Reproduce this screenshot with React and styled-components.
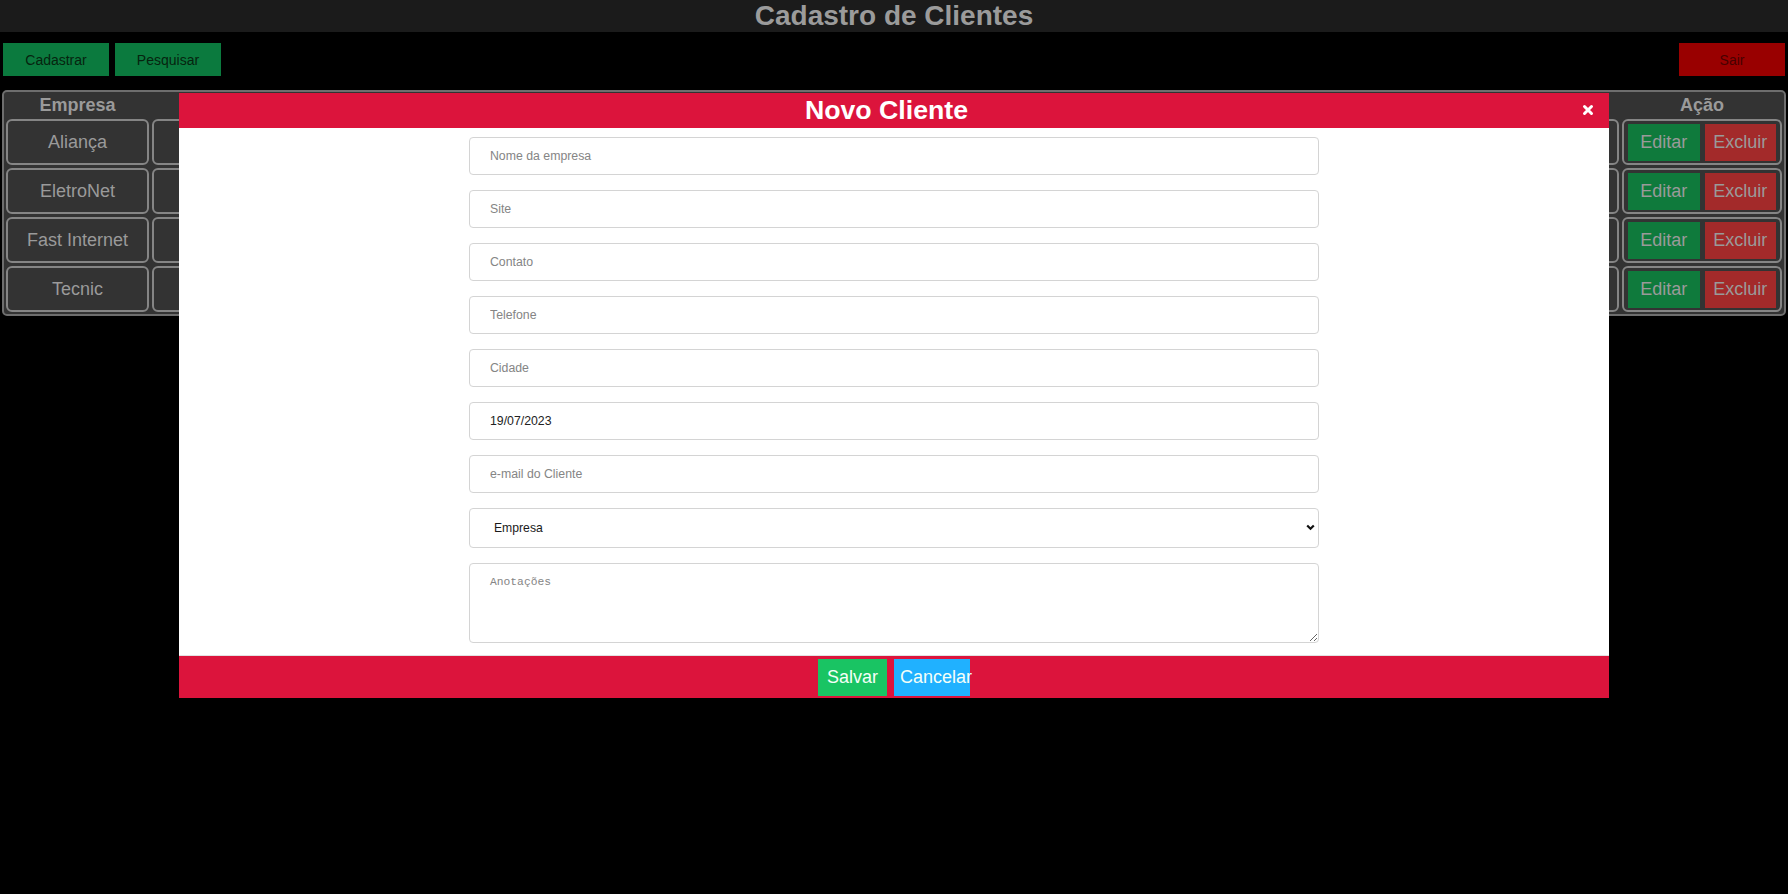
import React from "react";
import styled, { createGlobalStyle } from "styled-components";

const GlobalStyle = createGlobalStyle`
  html, body { margin: 0; padding: 0; background: #000; }
  body { font-family: "Liberation Sans", Arial, sans-serif; }
  * { box-sizing: border-box; }
`;

const Page = styled.div`
  min-height: 894px;
  background: #000;
`;

const TitleBar = styled.header`
  height: 32px;
  background: #1b1b1b;
  display: flex;
  align-items: center;
  justify-content: center;
`;

const Title = styled.h1`
  margin: 0;
  font-size: 28px;
  font-weight: 700;
  line-height: 32px;
  color: #9b9b9b;
`;

const Toolbar = styled.nav`
  display: flex;
  align-items: center;
  gap: 6px;
  padding: 0 3px;
  margin-top: 11px;
`;

const ToolButton = styled.button`
  width: 106px;
  height: 33px;
  padding: 0;
  border: none;
  margin-left: ${(p) => (p.$pushRight ? "auto" : "0")};
  background: ${(p) => (p.$danger ? "#990000" : "#0b7a3e")};
  color: ${(p) => (p.$danger ? "#480000" : "#06240f")};
  font: 14px "Liberation Sans", Arial, sans-serif;
`;

const Table = styled.div`
  margin: 14px 2px 0;
  padding: 2px;
  border: 2px solid #6e6e6e;
  border-radius: 5px;
  background: #333;
  display: grid;
  grid-template-columns: 143px repeat(6, 1fr) 160px;
  gap: 3px;
`;

const HeaderCell = styled.div`
  height: 22px;
  line-height: 22px;
  text-align: center;
  font-size: 18px;
  font-weight: 700;
  color: #9a9a9a;
`;

const Cell = styled.div`
  height: 46px;
  border: 2px solid #858585;
  border-radius: 6px;
  display: flex;
  align-items: center;
  justify-content: center;
  gap: 5px;
  padding: 0 4px;
  font-size: 18px;
  color: #9a9a9a;
  white-space: nowrap;
  overflow: hidden;
`;

const RowButton = styled.button`
  flex: 1;
  height: 37px;
  padding: 0;
  border: none;
  background: ${(p) => (p.$danger ? "#a32a2a" : "#0f7a3c")};
  color: #9a9a9a;
  font: 18px "Liberation Sans", Arial, sans-serif;
`;

const Backdrop = styled.div`
  position: fixed;
  inset: 0;
  display: flex;
  justify-content: center;
  align-items: flex-start;
  padding-top: 93px;
`;

const Modal = styled.div`
  width: 80%;
  background: #fff;
  display: flex;
  flex-direction: column;
`;

const ModalHeader = styled.div`
  position: relative;
  height: 35px;
  background: #dc143c;
  padding-right: 15px;
  display: flex;
  align-items: center;
  justify-content: center;
`;

const ModalTitle = styled.h2`
  margin: 0;
  font-size: 26.7px;
  font-weight: 700;
  color: #fff;
  line-height: 35px;
`;

const CloseButton = styled.button`
  position: absolute;
  right: 15px;
  top: 11px;
  width: 12px;
  height: 12px;
  padding: 0;
  border: none;
  background: none;
  display: flex;
`;

const Form = styled.form`
  display: flex;
  flex-direction: column;
  align-items: center;
  gap: 15px;
  padding: 9px 0 12px;
`;

const Field = styled.input`
  width: 850px;
  height: 38px;
  padding: 0 20px;
  border: 1px solid #d4d4d4;
  border-radius: 4px;
  background: #fff;
  font: 12.3px "Liberation Sans", Arial, sans-serif;
  color: #222;
  outline: none;
  &::placeholder { color: #858585; }
`;

const SelectWrap = styled.div`
  position: relative;
  width: 850px;
  height: 40px;
`;

const Select = styled.select`
  appearance: none;
  width: 100%;
  height: 100%;
  padding: 0 20px 0 24px;
  border: 1px solid #d4d4d4;
  border-radius: 4px;
  background: #fff;
  font: 12.2px "Liberation Sans", Arial, sans-serif;
  color: #1a1a1a;
  outline: none;
`;

const Chevron = styled.svg`
  position: absolute;
  right: 4px;
  top: 16px;
  pointer-events: none;
`;

const Notes = styled.textarea`
  width: 850px;
  height: 80px;
  padding: 12px 20px;
  border: 1px solid #d4d4d4;
  border-radius: 4px;
  font: 11.3px "Liberation Mono", monospace;
  color: #222;
  outline: none;
  &::placeholder { color: #858585; }
`;

const ModalFooter = styled.div`
  height: 43px;
  background: #dc143c;
  border-top: 1px solid #e2e2e2;
  display: flex;
  align-items: center;
  justify-content: center;
  gap: 7px;
`;

const FooterButton = styled.button`
  width: ${(p) => p.$w}px;
  height: 37px;
  padding: 0 0 0 ${(p) => (p.$tight ? 6 : 0)}px;
  border: none;
  background: ${(p) => p.$bg};
  color: #f4fff8;
  font: 18px "Liberation Sans", Arial, sans-serif;
  text-align: ${(p) => (p.$tight ? "left" : "center")};
  white-space: nowrap;
  overflow: visible;
`;

const columns = ["Empresa", "Site", "Contato", "Telefone", "Cidade", "Data", "E-mail", "Ação"];

const clients = [
  ["Aliança", "www.alianca.com.br", "Marcos", "(11) 3456-7890", "São Paulo", "12/05/2023", "contato@alianca.com.br"],
  ["EletroNet", "www.eletronet.com.br", "Paula", "(21) 2345-6789", "Rio de Janeiro", "03/06/2023", "paula@eletronet.com.br"],
  ["Fast Internet", "www.fastinternet.com", "Ricardo", "(31) 3222-4455", "Belo Horizonte", "28/06/2023", "ricardo@fast.com"],
  ["Tecnic", "www.tecnic.com.br", "Ana", "(41) 3030-1212", "Curitiba", "10/07/2023", "ana@tecnic.com.br"],
];

const placeholders = ["Nome da empresa", "Site", "Contato", "Telefone", "Cidade"];

export default function App() {
  return (
    <Page>
      <GlobalStyle />
      <TitleBar>
        <Title>Cadastro de Clientes</Title>
      </TitleBar>
      <Toolbar>
        <ToolButton>Cadastrar</ToolButton>
        <ToolButton>Pesquisar</ToolButton>
        <ToolButton $danger $pushRight>Sair</ToolButton>
      </Toolbar>
      <Table>
        {columns.map((c) => (
          <HeaderCell key={c}>{c}</HeaderCell>
        ))}
        {clients.map((row) => (
          <React.Fragment key={row[0]}>
            {row.map((v, i) => (
              <Cell key={i}>{v}</Cell>
            ))}
            <Cell>
              <RowButton>Editar</RowButton>
              <RowButton $danger>Excluir</RowButton>
            </Cell>
          </React.Fragment>
        ))}
      </Table>

      <Backdrop>
        <Modal>
          <ModalHeader>
            <ModalTitle>Novo Cliente</ModalTitle>
            <CloseButton aria-label="Fechar">
              <svg width="12" height="12" viewBox="0 0 12 12">
                <path d="M2.5 2.5 L9.5 9.5 M9.5 2.5 L2.5 9.5" stroke="#fff" strokeWidth="3" strokeLinecap="round" />
              </svg>
            </CloseButton>
          </ModalHeader>
          <Form onSubmit={(e) => e.preventDefault()}>
            {placeholders.map((p) => (
              <Field key={p} placeholder={p} />
            ))}
            <Field defaultValue="19/07/2023" />
            <Field placeholder="e-mail do Cliente" />
            <SelectWrap>
              <Select defaultValue="">
                <option value="">Empresa</option>
                <option>Aliança</option>
                <option>EletroNet</option>
                <option>Fast Internet</option>
                <option>Tecnic</option>
              </Select>
              <Chevron width="9" height="7" viewBox="0 0 9 7">
                <path d="M1.2 1.5 L4.5 4.8 L7.8 1.5" fill="none" stroke="#111" strokeWidth="2.2" />
              </Chevron>
            </SelectWrap>
            <Notes placeholder="Anotações" />
          </Form>
          <ModalFooter>
            <FooterButton $w={69} $bg="#19c463">Salvar</FooterButton>
            <FooterButton $w={76} $bg="#20b1ff" $tight>Cancelar</FooterButton>
          </ModalFooter>
        </Modal>
      </Backdrop>
    </Page>
  );
}
